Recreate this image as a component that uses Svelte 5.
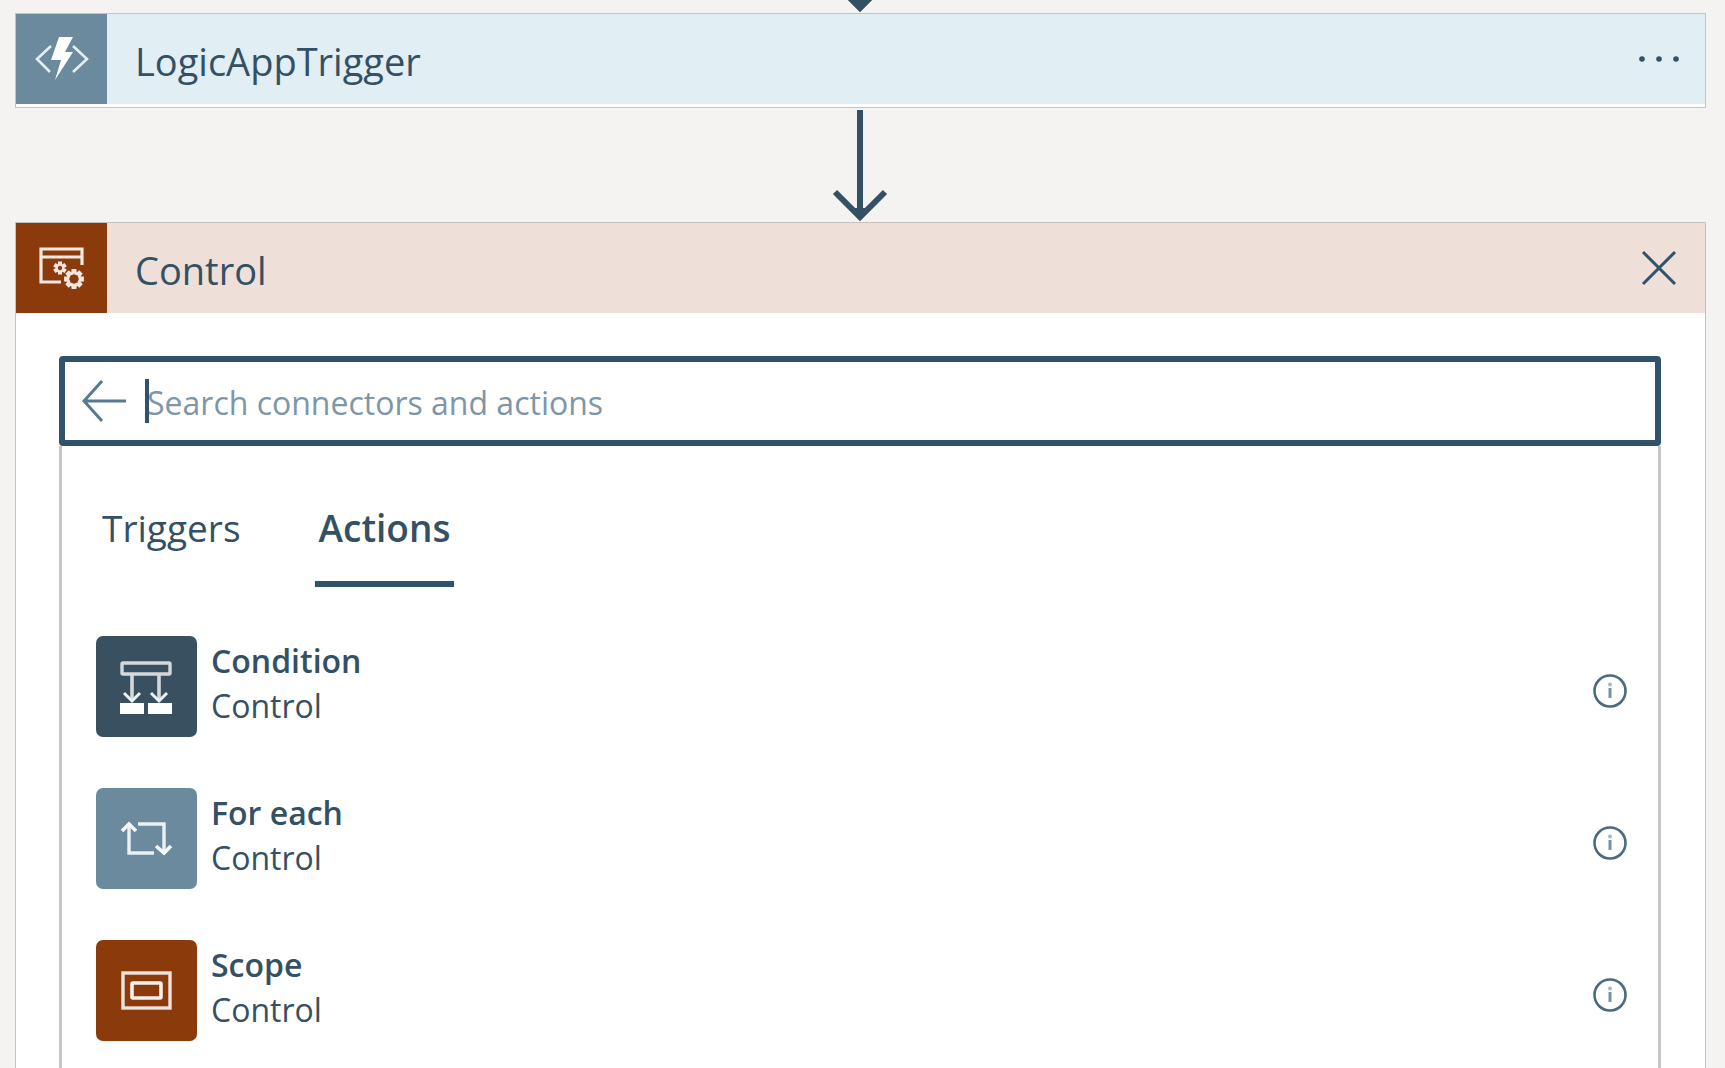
<script>
  const actions = [
    { id: 'condition', name: 'Condition', connector: 'Control' },
    { id: 'foreach', name: 'For each', connector: 'Control' },
    { id: 'scope', name: 'Scope', connector: 'Control' }
  ];
  let tab = $state('Actions');
  let query = $state('');

  // Outline of a cog with the given number of teeth.
  function cog(cx, cy, outer, inner, teeth) {
    const points = [];
    const step = (Math.PI * 2) / teeth;
    for (let i = 0; i < teeth; i++) {
      const a = i * step - Math.PI / 2;
      for (const [offset, r] of [[-0.3, inner], [-0.17, outer], [0.17, outer], [0.3, inner]]) {
        const t = a + offset * step;
        points.push(`${(cx + r * Math.cos(t)).toFixed(2)},${(cy + r * Math.sin(t)).toFixed(2)}`);
      }
    }
    return points.join(' ');
  }
</script>

{#snippet arrow()}
  <svg class="arrow" width="60" height="112" viewBox="0 0 60 112" aria-hidden="true">
    <path d="M29 0V107M4 82L29 107L54 82" />
    <path class="tip" d="M20 98L29 107L38 98Z" />
  </svg>
{/snippet}

<main>
  <div class="connector incoming">{@render arrow()}</div>

  <section class="card trigger">
    <header>
      <span class="badge">
        <svg width="91" height="90" viewBox="0 0 91 90" aria-hidden="true">
          <path d="M35 32L21 45L34 58M57 32L71 45L57 58" fill="none" stroke="#e4eff5" stroke-width="2.6" />
          <path d="M43 23H57L49 38H57L39 66L45 46H35Z" fill="#fff" />
        </svg>
      </span>
      <h2>LogicAppTrigger</h2>
      <button class="icon-button" aria-label="More commands">
        <svg width="44" height="44" viewBox="0 0 44 44" aria-hidden="true">
          <circle cx="5" cy="22" r="2.8" /><circle cx="22" cy="22" r="2.8" /><circle cx="39" cy="22" r="2.8" />
        </svg>
      </button>
    </header>
  </section>

  <div class="connector">{@render arrow()}</div>

  <section class="card control">
    <header>
      <span class="badge">
        <svg width="91" height="90" viewBox="0 0 91 90" fill="none" stroke="#f1e6e0" stroke-width="3.2" aria-hidden="true">
          <path d="M45 59H25V26H66V42M25 34H66" />
          <polygon points={cog(44, 45, 5.6, 3.2, 6)} stroke-width="2.2" />
          <polygon points={cog(58, 56, 8.6, 6, 8)} stroke-width="2.8" />
        </svg>
      </span>
      <h2>Control</h2>
      <button class="icon-button" aria-label="Close">
        <svg width="44" height="44" viewBox="0 0 44 44" aria-hidden="true">
          <path d="M6 6L38 38M38 6L6 38" />
        </svg>
      </button>
    </header>

    <div class="picker">
      <div class="search">
        <button class="back" aria-label="Back">
          <svg width="44" height="44" viewBox="0 0 44 44" aria-hidden="true">
            <path d="M20 2L2 22L20 42M2 22H44" />
          </svg>
        </button>
        <div class="field">
          <input type="text" aria-label="Search connectors and actions" placeholder="Search connectors and actions" bind:value={query} />
          <span class="caret"></span>
        </div>
      </div>

      <div class="results">
        <div class="tabs" role="tablist">
          {#each ['Triggers', 'Actions'] as name}
            <button role="tab" aria-selected={tab === name} class:selected={tab === name} onclick={() => (tab = name)}>{name}</button>
          {/each}
        </div>

        <ul>
          {#each actions as action}
            <li>
              <span class="tile {action.id}">
                <svg width="101" height="101" viewBox="0 0 101 101" fill="none" aria-hidden="true">
                  {#if action.id === 'condition'}
                    <rect x="26" y="27" width="48" height="11" rx="1" stroke="#d5d8da" stroke-width="3.4" />
                    <path d="M36 39V65M63 39V65" stroke="#d5d8da" stroke-width="3.6" />
                    <path d="M28 57L36 65L44 57M55 57L63 65L71 57" stroke="#eef1f3" stroke-width="3" />
                    <path d="M24 67H48V78H24ZM52 67H76V78H52Z" fill="#fff" />
                  {:else if action.id === 'foreach'}
                    <path d="M58 65H33V37M42 36H68V64" stroke="#e9f1f5" stroke-width="3.4" />
                    <path d="M26 43L33 36L40 43M60 58L68 65L75 58" stroke="#f4f8fa" stroke-width="3.6" />
                  {:else}
                    <rect x="27" y="33" width="47" height="35" stroke="#eee2dc" stroke-width="3.4" />
                    <rect x="36" y="43" width="29" height="15" rx="1" stroke="#f5efec" stroke-width="3.6" />
                  {/if}
                </svg>
              </span>
              <div class="label">
                <strong>{action.name}</strong>
                <span>{action.connector}</span>
              </div>
              <button class="info" aria-label="About {action.name}">
                <svg width="36" height="36" viewBox="0 0 36 36" aria-hidden="true">
                  <circle cx="18" cy="18" r="15.5" fill="none" stroke="#496b80" stroke-width="2.6" />
                  <circle cx="18" cy="11.5" r="2" fill="#adb7bd" />
                  <path d="M18 15V25" stroke="#7891a1" stroke-width="3" />
                </svg>
              </button>
            </li>
          {/each}
        </ul>
      </div>
    </div>
  </section>
</main>

<style>
  :global(body) {
    margin: 0;
    background: #f4f3f2;
  }
  main {
    box-sizing: border-box;
    display: flex;
    flex-direction: column;
    height: 100vh;
    overflow: hidden;
    padding: 0 19px 0 15px;
    color: #345063;
    font-family: 'Open Sans', 'Noto Sans', sans-serif;
  }
  button {
    border: 0;
    padding: 0;
    background: none;
    color: inherit;
    font: inherit;
    cursor: pointer;
  }
  svg {
    display: block;
  }
  .connector {
    display: flex;
    flex: none;
    align-items: flex-end;
    justify-content: center;
    height: 114px;
    overflow: hidden;
  }
  .connector.incoming {
    height: 13px;
  }
  .arrow {
    flex: none;
    fill: none;
    stroke: #345063;
    stroke-width: 6;
  }
  .arrow .tip {
    fill: #345063;
    stroke: none;
  }
  .card {
    border: 1px solid #c9c1bf;
    background: #fff;
  }
  .trigger {
    padding-bottom: 3px;
  }
  .control {
    display: flex;
    flex: 1 0 auto;
    flex-direction: column;
    border-bottom: 0;
  }
  header {
    display: flex;
    align-items: center;
    height: 90px;
    padding-right: 24px;
  }
  .trigger header {
    background: #e1eef4;
  }
  .control header {
    background: #eee0d9;
  }
  .trigger .badge {
    background: #6b8a9e;
  }
  .control .badge {
    background: #8b3a0c;
  }
  h2 {
    flex: 1;
    margin: 0;
    padding: 4px 0 0 28px;
    font-size: 38px;
    font-weight: 400;
    line-height: 48px;
  }
  .icon-button svg {
    fill: #30536b;
  }
  .icon-button path {
    stroke: #30536b;
    stroke-width: 3;
  }
  .picker {
    display: flex;
    flex: 1;
    flex-direction: column;
    padding: 43px 44px 0 43px;
  }
  .search {
    display: flex;
    align-items: center;
    gap: 21px;
    box-sizing: border-box;
    height: 90px;
    padding: 0 17px;
    border: 6px solid #30536b;
    border-radius: 4px;
  }
  .back svg {
    fill: none;
    stroke: #587a90;
    stroke-width: 3;
  }
  .field {
    position: relative;
    flex: 1;
  }
  .field input {
    box-sizing: border-box;
    width: 100%;
    height: 48px;
    padding: 2px 0 0;
    border: 0;
    outline: 0;
    background: none;
    color: #345063;
    font: inherit;
    font-size: 32px;
  }
  .field input::placeholder {
    color: #7e96a5;
    opacity: 1;
  }
  .caret {
    position: absolute;
    top: 2px;
    left: -2px;
    width: 4px;
    height: 44px;
    background: #30536b;
  }
  .results {
    flex: 1;
    padding: 50px 30px 0 34px;
    border: solid #c6c6c6;
    border-width: 0 3px;
  }
  .tabs {
    display: flex;
    gap: 70px;
    padding-left: 2px;
  }
  .tabs button {
    height: 91px;
    padding: 0 4px 22px;
    border-bottom: 6px solid transparent;
    font-size: 37px;
    line-height: 48px;
  }
  .tabs .selected {
    border-color: #30536b;
    font-weight: 600;
  }
  ul {
    display: flex;
    flex-direction: column;
    gap: 51px;
    margin: 0;
    padding: 49px 0 0;
    list-style: none;
  }
  li {
    display: flex;
    align-items: center;
    gap: 14px;
  }
  .tile {
    border-radius: 7px;
  }
  .condition {
    background: #38505f;
  }
  .foreach {
    background: #6b8a9e;
  }
  .scope {
    background: #8b3a0c;
  }
  .label {
    display: flex;
    flex: 1;
    flex-direction: column;
    padding-bottom: 8px;
    font-size: 32px;
    line-height: 45px;
  }
  .label strong {
    font-weight: 600;
  }
  .info {
    padding-top: 8px;
  }
</style>
